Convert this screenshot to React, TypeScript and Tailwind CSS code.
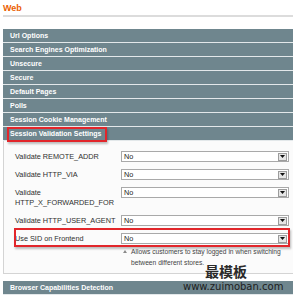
import React from 'react'

const sections = [
  'Url Options',
  'Search Engines Optimization',
  'Unsecure',
  'Secure',
  'Default Pages',
  'Polls',
  'Session Cookie Management',
]

function Head({ title, children }: { title: string; children?: React.ReactNode }) {
  return (
    <div className="relative h-[14px] border-b border-[#e3e8ea] bg-[#6f868e] pl-[7px] text-[7px] font-bold leading-[13px] text-white">
      {title}
      {children}
    </div>
  )
}

function Select() {
  return (
    <div className="flex h-[11px] w-[168px] shrink-0 items-center border border-[#a9a9a9] bg-white">
      <span className="flex-1 pl-[2px] text-[7.3px] leading-none text-[#222]">No</span>
      <span className="mr-[1px] flex h-[8px] w-[9px] items-center justify-center border border-[#9c9c9c] bg-[#e6e6e6]">
        <svg width="5" height="3" viewBox="0 0 5 3">
          <polygon points="0,0 5,0 2.5,3" fill="#111" />
        </svg>
      </span>
    </div>
  )
}

function Row({ label, children }: { label: string; children?: React.ReactNode }) {
  return (
    <div className="flex">
      <div className="w-[106px] shrink-0 pt-[1px] pr-[4px] text-[7.3px] leading-[10px] text-[#2f2f2f]">{label}</div>
      {children ?? <Select />}
    </div>
  )
}

export default function App() {
  return (
    <div className="relative h-[300px] w-[293px] overflow-hidden bg-white font-['Liberation_Sans',Arial,sans-serif]">
      <div className="w-[300px]">
        <h3 className="pl-[3px] pt-[2px] text-[9px] font-bold leading-[12px] text-[#eb5e00]">Web</h3>
        <div className="ml-[3px] mt-[1px] h-[2px] bg-[#dcdcdc]" />

        <div className="ml-[3px] mt-[12px]">
          {sections.map((s) => (
            <Head key={s} title={s} />
          ))}
          <Head title="Session Validation Settings">
            <div className="absolute left-[4px] top-0 h-[15px] w-[100px] border-2 border-[#e2262b] shadow-[1px_2px_2px_rgba(0,0,0,0.25)]" />
          </Head>

          {/* expanded fieldset */}
          <div className="border-b border-l border-[#d4d4d4] bg-[#fbfbfb] pb-[5.5px] pl-[11px] pt-[10px]">
            <div className="flex flex-col gap-[7px]">
              <Row label="Validate REMOTE_ADDR" />
              <Row label="Validate HTTP_VIA" />
              <Row label="Validate HTTP_X_FORWARDED_FOR" />
              <Row label="Validate HTTP_USER_AGENT" />
              <div className="relative">
                <Row label="Use SID on Frontend">
                  <div className="flex flex-col">
                    <Select />
                    <div className="mt-[1.5px] flex w-[160px] text-[6.7px] leading-[11px] text-[#444]">
                      <svg width="4" height="3" viewBox="0 0 4 3" className="mt-[4px] ml-[2px] mr-[4px] shrink-0">
                        <polygon points="0,3 4,3 2,0" fill="#8a8a8a" />
                      </svg>
                      <span>Allows customers to stay logged in when switching between different stores.</span>
                    </div>
                  </div>
                </Row>
                <div className="absolute left-[-1px] top-[-5px] h-[19px] w-[276px] border-2 border-[#e2262b] shadow-[1px_2px_2px_rgba(0,0,0,0.25)]" />
              </div>
            </div>
          </div>

          <div className="mt-[7px]">
            <Head title="Browser Capabilities Detection" />
          </div>
        </div>
      </div>

      {/* watermark */}
      <div className="absolute left-[205px] top-[263px] font-['Noto_Sans_CJK_SC',sans-serif] text-[14px] font-bold leading-[16px] text-[#2a2a2a]">
        最模板
      </div>
      <div className="absolute left-[183px] top-[282px] font-['DejaVu_Sans',sans-serif] text-[10px] leading-[10px] text-[#1c1c1c]">
        www.zuimoban.com
      </div>
    </div>
  )
}
